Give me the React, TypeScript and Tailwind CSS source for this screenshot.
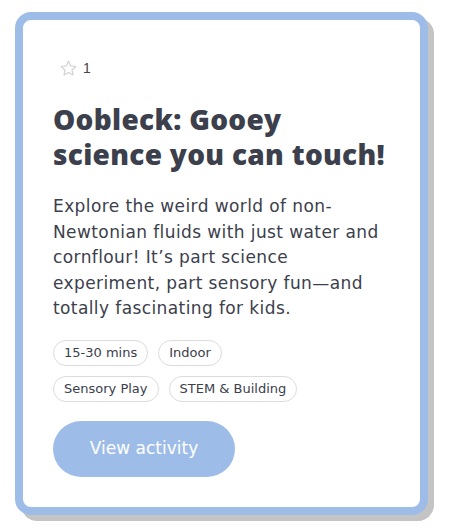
import React from "react";

const tags = [["15-30 mins", "Indoor"], ["Sensory Play", "STEM & Building"]];

const App = () => {
  return (
    <div className="min-h-[529px] bg-white pl-[15px] pt-[12px]">
      {/* Card */}
      <div className="w-[413px] h-[503px] rounded-[16px] border-[8px] border-[#9dbde8] bg-white shadow-[6px_6px_0_#c4c4c4] px-[30px] pt-[39px] pb-[30px] flex flex-col">
        {/* Rating */}
        <div className="flex items-center gap-[5px] h-[18px] pl-[6px]">
          <svg width="19" height="19" viewBox="0 0 24 24" fill="none" stroke="#d2d2d2" strokeWidth="1.5" strokeLinejoin="round">
            <path d="M12 2.8l2.75 5.9 6.45.75-4.8 4.4 1.3 6.35L12 17l-5.7 3.2 1.3-6.35-4.8-4.4 6.45-.75z" />
          </svg>
          <span className="text-[14px] text-[#444] font-['Liberation_Sans',sans-serif]">1</span>
        </div>

        {/* Title */}
        <h2 className="mt-[25px] text-[28px] leading-[35px] font-extrabold tracking-[0.3px] text-[#3b404c] font-['Open_Sans',sans-serif]">
          Oobleck: Gooey science you can touch!
        </h2>

        {/* Description */}
        <p className="mt-[22px] text-[17px] leading-[25.5px] tracking-[0.4px] text-[#3b404c] font-['DejaVu_Sans',sans-serif]">
          Explore the weird world of non-Newtonian fluids with just water and cornflour! It’s part science experiment, part sensory fun—and totally fascinating for kids.
        </p>

        {/* Tags */}
        <div className="mt-[18px] flex flex-col gap-[10px]">
          {tags.map((row, i) => (
            <div key={i} className="flex gap-[10px]">
              {row.map((t) => (
                <span
                  key={t}
                  className="h-[26px] px-[10px] flex items-center rounded-full border border-[#dcdcdc] text-[13px] text-[#3b404c] font-['DejaVu_Sans',sans-serif]"
                >
                  {t}
                </span>
              ))}
            </div>
          ))}
        </div>

        {/* Button */}
        <button className="mt-[19px] w-[182px] h-[57px] rounded-full bg-[#9dbde8] text-white text-[17px] font-['DejaVu_Sans',sans-serif]">
          View activity
        </button>
      </div>
    </div>
  );
};

export default App;
